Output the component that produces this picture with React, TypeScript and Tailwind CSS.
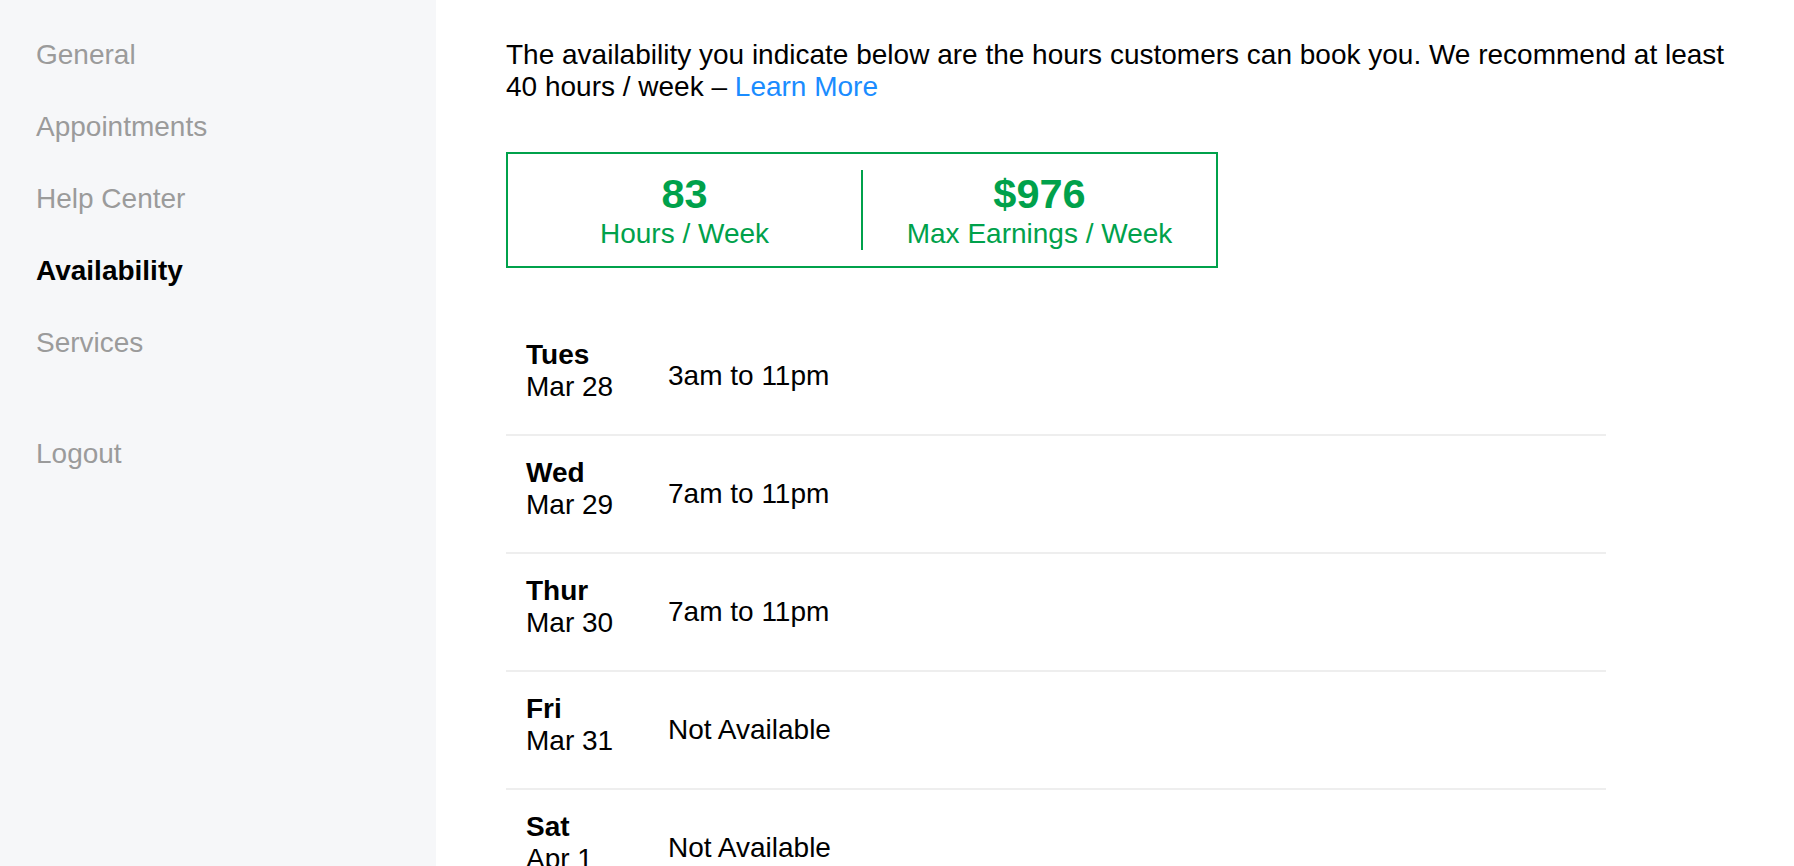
const menu = ["General", "Appointments", "Help Center", "Availability", "Services"];

const days = [
  { day: "Tues", date: "Mar 28", hours: "3am to 11pm" },
  { day: "Wed", date: "Mar 29", hours: "7am to 11pm" },
  { day: "Thur", date: "Mar 30", hours: "7am to 11pm" },
  { day: "Fri", date: "Mar 31", hours: "Not Available" },
  { day: "Sat", date: "Apr 1", hours: "Not Available" },
  { day: "Sun", date: "Apr 2", hours: "Not Available" },
];

export default function App() {
  return (
    <div className="h-[866px] overflow-hidden flex bg-white text-black font-['Liberation_Sans',Arial,sans-serif]">
      {/* Sidebar */}
      <aside className="w-[436px] shrink-0 bg-[#f6f7f9] pl-[36px] pt-[39px]">
        <nav className="flex flex-col gap-[40px] text-[28px] leading-[32px]">
          {menu.map((item) => (
            <a
              key={item}
              className={item === "Availability" ? "font-bold text-black" : "text-[#9b9b9b]"}
            >
              {item}
            </a>
          ))}
          <a className="mt-[39px] text-[#9b9b9b]">Logout</a>
        </nav>
      </aside>

      {/* Main */}
      <main className="flex-1 pl-[70px] pt-[39px]">
        <p className="w-[1232px] text-[28px] leading-[32px]">
          The availability you indicate below are the hours customers can book you. We recommend at least 40 hours / week –{" "}
          <a className="text-[#1a8cff]">Learn More</a>
        </p>

        <div className="mt-[49px] w-[712px] h-[116px] border-2 border-[#00a14b] flex items-center text-[#00a14b]">
          <div className="flex-1 flex flex-col items-center">
            <span className="text-[41.5px] leading-[48px] font-bold">83</span>
            <span className="text-[28px] leading-[32px]">Hours / Week</span>
          </div>
          <div className="flex-1 flex flex-col items-center border-l-2 border-[#00a14b]">
            <span className="text-[41.5px] leading-[48px] font-bold">$976</span>
            <span className="text-[28px] leading-[32px]">Max Earnings / Week</span>
          </div>
        </div>

        <ul className="mt-[50px] w-[1100px]">
          {days.map((d) => (
            <li key={d.day} className="h-[118px] border-b-2 border-[#eeeeee] flex items-center pl-[20px] text-[28px] leading-[32px]">
              <div className="w-[142px] pb-[10px]">
                <div className="font-bold">{d.day}</div>
                <div>{d.date}</div>
              </div>
              <div>{d.hours}</div>
            </li>
          ))}
        </ul>
      </main>
    </div>
  );
}
